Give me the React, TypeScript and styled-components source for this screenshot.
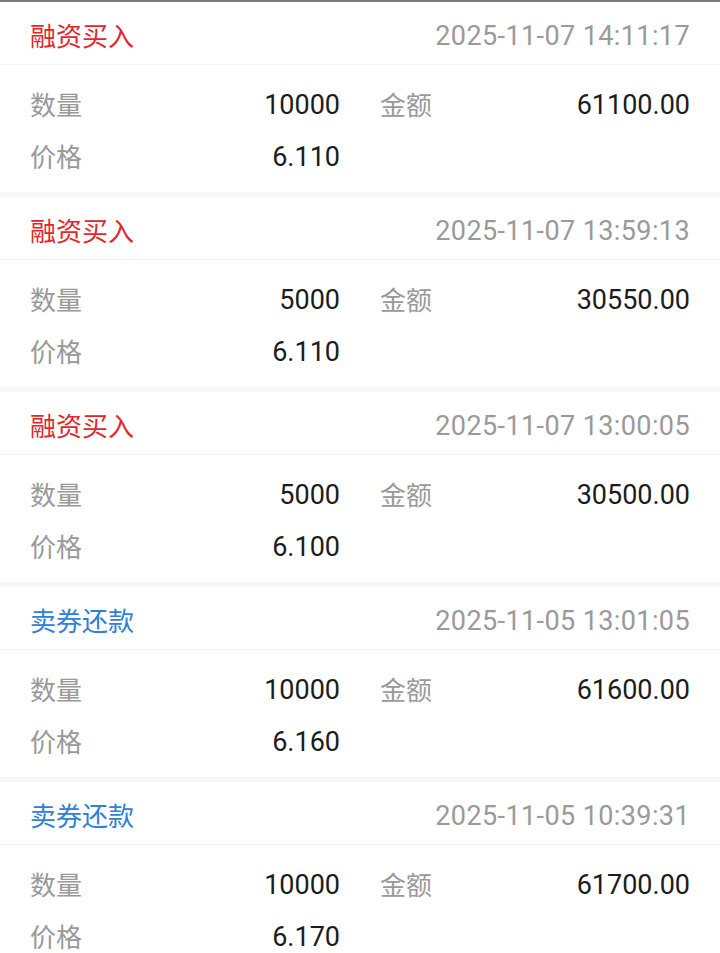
import React from "react";
import styled, { createGlobalStyle } from "styled-components";

const GlobalStyle = createGlobalStyle`
  html, body {
    margin: 0;
    padding: 0;
    background: #f5f6f8;
  }
  body {
    font-family: Roboto, "Noto Sans CJK SC", sans-serif;
    -webkit-font-smoothing: antialiased;
  }
`;

const Page = styled.div`
  width: 720px;
  border-top: 2px solid #7a7a7a;
  display: flex;
  flex-direction: column;
  gap: 5px;
`;

const Card = styled.div`
  background: #fff;
`;

const Header = styled.div`
  box-sizing: border-box;
  height: 63px;
  padding: 4px 30px 0;
  display: flex;
  align-items: center;
  justify-content: space-between;
  border-bottom: 1px solid #f2f2f2;
`;

const Title = styled.span<{ $kind: "buy" | "repay" }>`
  font-family: "Noto Sans CJK SC", sans-serif;
  font-size: 26px;
  line-height: 1;
  color: ${(p) => (p.$kind === "buy" ? "#e2262b" : "#2e80d9")};
`;

const Time = styled.span`
  display: inline-block;
  padding-top: 3px;
  font-family: Roboto, sans-serif;
  font-size: 27px;
  line-height: 1;
  letter-spacing: 0.4px;
  color: #9a9a9a;
`;

const Body = styled.div`
  padding: 13px 30px 10px;
  display: grid;
  grid-template-columns: 1fr 1fr;
  column-gap: 40px;
`;

const Field = styled.div`
  height: 52px;
  display: flex;
  align-items: center;
  justify-content: space-between;
`;

const Label = styled.span`
  font-family: "Noto Sans CJK SC", sans-serif;
  font-size: 26px;
  line-height: 1;
  color: #999;
`;

const Value = styled.span`
  display: inline-block;
  padding-top: 2px;
  font-family: Roboto, sans-serif;
  font-size: 27px;
  line-height: 1;
  color: #1c1c1c;
`;

type Record = {
  type: string;
  kind: "buy" | "repay";
  time: string;
  qty: string;
  amount: string;
  price: string;
};

const records: Record[] = [
  { type: "融资买入", kind: "buy", time: "2025-11-07 14:11:17", qty: "10000", amount: "61100.00", price: "6.110" },
  { type: "融资买入", kind: "buy", time: "2025-11-07 13:59:13", qty: "5000", amount: "30550.00", price: "6.110" },
  { type: "融资买入", kind: "buy", time: "2025-11-07 13:00:05", qty: "5000", amount: "30500.00", price: "6.100" },
  { type: "卖券还款", kind: "repay", time: "2025-11-05 13:01:05", qty: "10000", amount: "61600.00", price: "6.160" },
  { type: "卖券还款", kind: "repay", time: "2025-11-05 10:39:31", qty: "10000", amount: "61700.00", price: "6.170" },
];

const RecordCard: React.FC<{ r: Record }> = ({ r }) => (
  <Card>
    <Header>
      <Title $kind={r.kind}>{r.type}</Title>
      <Time>{r.time}</Time>
    </Header>
    <Body>
      <Field>
        <Label>数量</Label>
        <Value>{r.qty}</Value>
      </Field>
      <Field>
        <Label>金额</Label>
        <Value>{r.amount}</Value>
      </Field>
      <Field>
        <Label>价格</Label>
        <Value>{r.price}</Value>
      </Field>
    </Body>
  </Card>
);

export default function App() {
  return (
    <>
      <GlobalStyle />
      <Page>
        {records.map((r, i) => (
          <RecordCard key={i} r={r} />
        ))}
      </Page>
    </>
  );
}
